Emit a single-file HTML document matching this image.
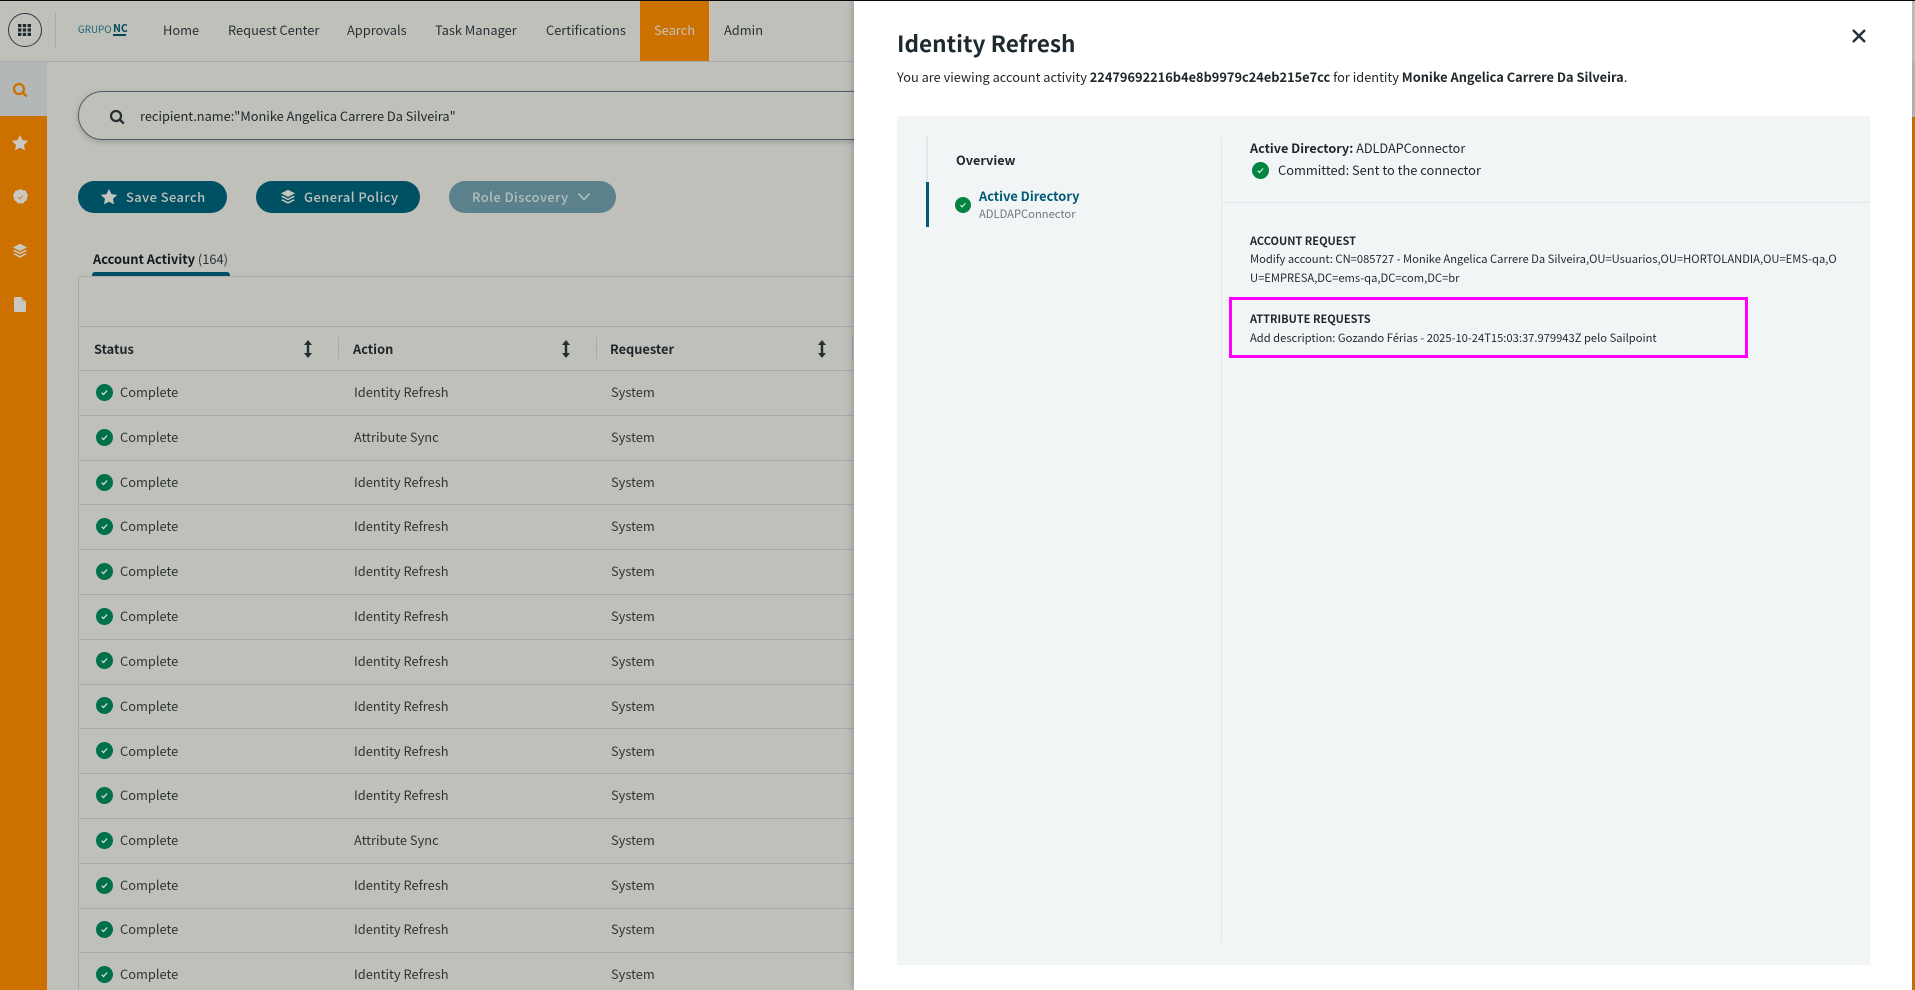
<!DOCTYPE html>
<html lang="en">
<head>
<meta charset="utf-8">
<title>Identity Refresh</title>
<style>
html,body{margin:0;padding:0;width:1915px;height:990px;overflow:hidden;background:#bfc0ba}
body{position:relative;font-family:"Noto Sans CJK JP","Liberation Sans",sans-serif;font-size:12.85px;color:#23292d}
.a,.t{position:absolute}
.t{white-space:nowrap;line-height:20px}
.b{font-weight:600}
.n{color:#263036;font-size:12.85px;top:20px}
.h{font-weight:600;color:#20272b;top:339px;font-size:12.8px}
.c{color:#2f3436;font-size:12.85px}
.line{position:absolute;background:#a9aaaa;height:1px;left:78px;width:776px}
svg{position:absolute;display:block}
.btn{position:absolute;top:181px;height:32px;border-radius:16px;background:#005064}
.bt{color:#bfc1bc;font-weight:500;font-size:12.9px;letter-spacing:.46px;top:187px}
.s{font-size:11.2px}
.sb{font-size:11px;font-weight:600}
</style>
</head>
<body>
<svg width="0" height="0" style="position:absolute">
<symbol id="ok" viewBox="0 0 16 16"><circle cx="8" cy="8" r="8" fill="currentColor"/><path d="M5.4 8.200l1.700 1.700 3.300-3.800" fill="none" stroke="#e6e8e4" stroke-width="1.100"/></symbol>
<symbol id="star" viewBox="0 0 16 16"><path d="M8 .6l2.300 4.800 5.200.7-3.800 3.600.9 5.200L8 12.400l-4.600 2.500.9-5.200L.5 6.100l5.200-.7z" fill="currentColor" stroke="currentColor" stroke-linejoin="round" stroke-width=".6"/></symbol>
<symbol id="layers" viewBox="0 0 16 16"><path d="M8 .8l7 3.600-7 3.600-7-3.600z" fill="currentColor"/><path d="M2.600 6.800L8 9.600l5.400-2.800 1.600.9L8 11.300 1 7.700z" fill="currentColor"/><path d="M2.600 10.200L8 13l5.400-2.800 1.600.9L8 14.800 1 11.100z" fill="currentColor"/></symbol>
<symbol id="sort" viewBox="0 0 12 20"><path d="M6 3v14" stroke="currentColor" stroke-width="2.400"/><path d="M2 6L6 1l4 5zM2 14l4 5 4-5z" fill="currentColor"/></symbol>
</svg>

<!-- Top nav -->
<div class="a" style="left:0;top:61px;width:854px;height:1px;background:#a9abaa"></div>
<div class="a" style="left:8px;top:13px;width:32px;height:32px;border:1.400px solid #2c3a42;border-radius:50%"></div>
<svg style="left:18px;top:24px" width="13" height="12" viewBox="0 0 13 12"><g fill="#1f2a30"><rect x="0" y="0" width="3.400" height="3.200"/><rect x="4.800" y="0" width="3.400" height="3.200"/><rect x="9.600" y="0" width="3.400" height="3.200"/><rect x="0" y="4.400" width="3.400" height="3.200"/><rect x="4.800" y="4.400" width="3.400" height="3.200"/><rect x="9.600" y="4.400" width="3.400" height="3.200"/><rect x="0" y="8.800" width="3.400" height="3.200"/><rect x="4.800" y="8.800" width="3.400" height="3.200"/><rect x="9.600" y="8.800" width="3.400" height="3.200"/></g></svg>
<div class="a" style="left:55px;top:12px;width:1px;height:36px;background:#a9abaa"></div>
<div class="t" style="left:78px;top:19px;font-size:9.800px;color:#1f6374">GRUPO</div>
<div class="t" style="left:113px;top:19px;font-size:10.500px;font-weight:700;color:#00495c">NC</div>
<div class="a" style="left:113px;top:34px;width:13px;height:1.500px;background:#00495c"></div>
<div class="t n" style="left:163px">Home</div>
<div class="t n" style="left:228px">Request Center</div>
<div class="t n" style="left:347px">Approvals</div>
<div class="t n" style="left:435px">Task Manager</div>
<div class="t n" style="left:546px">Certifications</div>
<div class="a" style="left:640px;top:1px;width:69px;height:60px;background:#cc7000"></div>
<div class="t n" style="left:654px;color:#c3c4bf">Search</div>
<div class="t n" style="left:724px">Admin</div>

<!-- Sidebar -->
<div class="a" style="left:0;top:62px;width:47px;height:928px;background:#cc7000"></div>
<div class="a" style="left:0;top:62px;width:47px;height:54px;background:#b3b7b5"></div>
<svg style="left:12px;top:82px" width="16" height="16" viewBox="0 0 16 16"><circle cx="7" cy="7" r="5" fill="none" stroke="#cc7000" stroke-width="2.200"/><path d="M10.500 10.500l4.300 4" stroke="#cc7000" stroke-width="2.400"/></svg>
<svg style="left:12px;top:135px;color:#c9c9c2" width="16" height="16"><use href="#star"/></svg>
<svg style="left:13px;top:189px" width="15" height="16" viewBox="0 0 15 16"><path d="M7.500 0l2.400 1.300 2.700.2 1.100 2.400 1.300 2.300-1 2.300 0 2.600-2.300 1.300-1.600 2.100-2.600-.3-2.600.3-1.600-2.100-2.300-1.300 0-2.600-1-2.300 1.300-2.300 1.100-2.400 2.700-.2z" fill="#c9c9c2"/><path d="M5 8.300l1.800 1.700 3.100-3.600" fill="none" stroke="#cc8a2a" stroke-width="1"/></svg>
<svg style="left:12px;top:243px;color:#c9c9c2" width="16" height="16"><use href="#layers"/></svg>
<svg style="left:14px;top:297px" width="12" height="15" viewBox="0 0 12 15"><path d="M1.500 0H7.500L12 4.500V13.500a1.500 1.500 0 0 1-1.500 1.500h-9A1.500 1.500 0 0 1 0 13.500V1.500A1.500 1.500 0 0 1 1.500 0z" fill="#c9c9c2"/><path d="M7.500 1.500l3 3" stroke="#cc8a2a" stroke-width="1"/></svg>

<!-- Search box -->
<div class="a" style="left:78px;top:91px;width:900px;height:47px;border:1.400px solid #4f5f67;border-radius:25px;box-shadow:0 2px 6px rgba(40,50,55,.25)"></div>
<svg style="left:109px;top:109px" width="16" height="16" viewBox="0 0 16 16"><circle cx="7" cy="7" r="5" fill="none" stroke="#252e33" stroke-width="2.200"/><path d="M10.500 10.500l4.300 4" stroke="#252e33" stroke-width="2.400"/></svg>
<div class="t" style="left:140px;top:106px;color:#20272b;font-size:12.800px">recipient.name:"Monike Angelica Carrere Da Silveira"</div>

<!-- Buttons -->
<div class="btn" style="left:78px;width:149px"></div>
<svg style="left:101px;top:189px;color:#c3c5bf" width="16" height="16"><use href="#star"/></svg>
<div class="t bt" style="left:126px">Save Search</div>
<div class="btn" style="left:256px;width:164px"></div>
<svg style="left:280px;top:189px;color:#c3c5bf" width="16" height="16"><use href="#layers"/></svg>
<div class="t bt" style="left:304px">General Policy</div>
<div class="btn" style="left:449px;width:167px;background:#5b828c"></div>
<div class="t bt" style="left:472px;color:#b4bfbd">Role Discovery</div>
<svg style="left:577px;top:192px" width="14" height="10" viewBox="0 0 14 10"><path d="M1.500 1.500L7 7.500l5.500-6" fill="none" stroke="#b4bfbd" stroke-width="1.500"/></svg>

<!-- Tab -->
<div class="t" style="left:93px;top:249px;color:#14191c"><span class="b">Account Activity</span> <span style="color:#2b3236">(164)</span></div>
<div class="a" style="left:92px;top:272px;width:138px;height:4px;background:#005064;border-radius:3px 3px 0 0"></div>

<!-- Table frame -->
<div class="line" style="top:276px"></div>
<div class="line" style="top:326px"></div>
<div class="a" style="left:78px;top:276px;width:1px;height:714px;background:#a9aaaa"></div>
<div class="line" style="top:370px"></div>
<div class="a" style="left:338px;top:337px;width:1px;height:22px;background:#a9aaaa"></div>
<div class="a" style="left:596px;top:337px;width:1px;height:22px;background:#a9aaaa"></div>
<div class="a" style="left:852px;top:337px;width:1px;height:22px;background:#a9aaaa"></div>
<div class="t h" style="left:94px">Status</div>
<div class="t h" style="left:353px">Action</div>
<div class="t h" style="left:610px">Requester</div>
<svg style="left:302px;top:339px;color:#222f36" width="12" height="20"><use href="#sort"/></svg>
<svg style="left:560px;top:339px;color:#222f36" width="12" height="20"><use href="#sort"/></svg>
<svg style="left:816px;top:339px;color:#222f36" width="12" height="20"><use href="#sort"/></svg>

<!-- Rows -->
<div class="line" style="top:415px"></div>
<div class="line" style="top:460px"></div>
<div class="line" style="top:504px"></div>
<div class="line" style="top:549px"></div>
<div class="line" style="top:594px"></div>
<div class="line" style="top:639px"></div>
<div class="line" style="top:684px"></div>
<div class="line" style="top:728px"></div>
<div class="line" style="top:773px"></div>
<div class="line" style="top:818px"></div>
<div class="line" style="top:863px"></div>
<div class="line" style="top:908px"></div>
<div class="line" style="top:952px"></div>

<svg style="left:96px;top:384px;color:#00704a" width="17" height="17"><use href="#ok"/></svg><div class="t c" style="left:120px;top:382px">Complete</div><div class="t c" style="left:354px;top:382px">Identity Refresh</div><div class="t c" style="left:611px;top:382px">System</div>
<svg style="left:96px;top:429px;color:#00704a" width="17" height="17"><use href="#ok"/></svg><div class="t c" style="left:120px;top:427px">Complete</div><div class="t c" style="left:354px;top:427px">Attribute Sync</div><div class="t c" style="left:611px;top:427px">System</div>
<svg style="left:96px;top:474px;color:#00704a" width="17" height="17"><use href="#ok"/></svg><div class="t c" style="left:120px;top:472px">Complete</div><div class="t c" style="left:354px;top:472px">Identity Refresh</div><div class="t c" style="left:611px;top:472px">System</div>
<svg style="left:96px;top:518px;color:#00704a" width="17" height="17"><use href="#ok"/></svg><div class="t c" style="left:120px;top:516px">Complete</div><div class="t c" style="left:354px;top:516px">Identity Refresh</div><div class="t c" style="left:611px;top:516px">System</div>
<svg style="left:96px;top:563px;color:#00704a" width="17" height="17"><use href="#ok"/></svg><div class="t c" style="left:120px;top:561px">Complete</div><div class="t c" style="left:354px;top:561px">Identity Refresh</div><div class="t c" style="left:611px;top:561px">System</div>
<svg style="left:96px;top:608px;color:#00704a" width="17" height="17"><use href="#ok"/></svg><div class="t c" style="left:120px;top:606px">Complete</div><div class="t c" style="left:354px;top:606px">Identity Refresh</div><div class="t c" style="left:611px;top:606px">System</div>
<svg style="left:96px;top:652px;color:#00704a" width="17" height="17"><use href="#ok"/></svg><div class="t c" style="left:120px;top:651px">Complete</div><div class="t c" style="left:354px;top:651px">Identity Refresh</div><div class="t c" style="left:611px;top:651px">System</div>
<svg style="left:96px;top:697px;color:#00704a" width="17" height="17"><use href="#ok"/></svg><div class="t c" style="left:120px;top:696px">Complete</div><div class="t c" style="left:354px;top:696px">Identity Refresh</div><div class="t c" style="left:611px;top:696px">System</div>
<svg style="left:96px;top:742px;color:#00704a" width="17" height="17"><use href="#ok"/></svg><div class="t c" style="left:120px;top:741px">Complete</div><div class="t c" style="left:354px;top:741px">Identity Refresh</div><div class="t c" style="left:611px;top:741px">System</div>
<svg style="left:96px;top:787px;color:#00704a" width="17" height="17"><use href="#ok"/></svg><div class="t c" style="left:120px;top:785px">Complete</div><div class="t c" style="left:354px;top:785px">Identity Refresh</div><div class="t c" style="left:611px;top:785px">System</div>
<svg style="left:96px;top:832px;color:#00704a" width="17" height="17"><use href="#ok"/></svg><div class="t c" style="left:120px;top:830px">Complete</div><div class="t c" style="left:354px;top:830px">Attribute Sync</div><div class="t c" style="left:611px;top:830px">System</div>
<svg style="left:96px;top:877px;color:#00704a" width="17" height="17"><use href="#ok"/></svg><div class="t c" style="left:120px;top:875px">Complete</div><div class="t c" style="left:354px;top:875px">Identity Refresh</div><div class="t c" style="left:611px;top:875px">System</div>
<svg style="left:96px;top:921px;color:#00704a" width="17" height="17"><use href="#ok"/></svg><div class="t c" style="left:120px;top:919px">Complete</div><div class="t c" style="left:354px;top:919px">Identity Refresh</div><div class="t c" style="left:611px;top:919px">System</div>
<svg style="left:96px;top:966px;color:#00704a" width="17" height="17"><use href="#ok"/></svg><div class="t c" style="left:120px;top:964px">Complete</div><div class="t c" style="left:354px;top:964px">Identity Refresh</div><div class="t c" style="left:611px;top:964px">System</div>

<!-- Right edge strip -->
<div class="a" style="left:1912px;top:62px;width:3px;height:55px;background:#b3b7b5"></div>
<div class="a" style="left:1912px;top:117px;width:3px;height:873px;background:#cc7000"></div>

<!-- Modal -->
<div class="a" style="left:854px;top:0;width:1058px;height:990px;background:#fff;box-shadow:-2px 0 6px rgba(0,0,0,.18)"></div>
<div class="a" style="left:0;top:0;width:1915px;height:1px;background:#0a0a0a"></div>
<div class="t" style="left:897px;top:28px;font-size:22.600px;line-height:30px;font-weight:600;color:#1f2a30">Identity Refresh</div>
<svg style="left:1852px;top:29px" width="14" height="14" viewBox="0 0 14 14"><path d="M1 1l12 12M13 1L1 13" stroke="#22313a" stroke-width="2.400"/></svg>
<div class="t" style="left:897px;top:67px;color:#20272b;font-size:12.800px">You are viewing account activity <span class="b">22479692216b4e8b9979c24eb215e7cc</span> for identity <span class="b">Monike Angelica Carrere Da Silveira</span>.</div>

<div class="a" style="left:897px;top:116px;width:973px;height:849px;background:#f2f5f6"></div>
<div class="a" style="left:926px;top:137px;width:2px;height:45px;background:#e3e7e9"></div>
<div class="a" style="left:926px;top:182px;width:3px;height:45px;background:#005a73"></div>
<div class="t b" style="left:956px;top:150px;color:#1f272c;font-size:12.700px">Overview</div>
<svg style="left:955px;top:197px;color:#00843f" width="16" height="16"><use href="#ok"/></svg>
<div class="t b" style="left:979px;top:186px;color:#005a73;font-size:12.800px">Active Directory</div>
<div class="t s" style="left:979px;top:204px;color:#6d7880">ADLDAPConnector</div>

<div class="a" style="left:1221px;top:137px;width:1px;height:806px;background:#e3e7e9"></div>
<div class="a" style="left:1222px;top:202px;width:648px;height:1px;background:#e3e7e9"></div>
<div class="t" style="left:1250px;top:138px;color:#1f272c;font-size:12.650px"><span class="b">Active Directory:</span> ADLDAPConnector</div>
<svg style="left:1252px;top:162px;color:#00843f" width="17" height="17"><use href="#ok"/></svg>
<div class="t" style="left:1278px;top:160px;color:#1f272c;font-size:12.850px">Committed: Sent to the connector</div>

<div class="t sb" style="left:1250px;top:231px;color:#1f272c">ACCOUNT REQUEST</div>
<div class="t s" style="left:1250px;top:250px;line-height:19px;color:#1f272c">Modify account: CN=085727 - Monike Angelica Carrere Da Silveira,OU=Usuarios,OU=HORTOLANDIA,OU=EMS-qa,O<br>U=EMPRESA,DC=ems-qa,DC=com,DC=br</div>

<div class="a" style="left:1229px;top:297px;width:513px;height:55px;border:3px solid #f0f"></div>
<div class="t sb" style="left:1250px;top:309px;color:#1f272c">ATTRIBUTE REQUESTS</div>
<div class="t s" style="left:1250px;top:328px;color:#1f272c">Add description: Gozando Férias - 2025-10-24T15:03:37.979943Z pelo Sailpoint</div>
</body>
</html>
